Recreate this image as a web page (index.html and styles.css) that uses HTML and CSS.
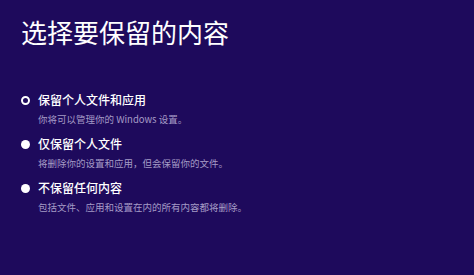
FILE: index.html
```html
<!DOCTYPE html>
<html lang="zh-CN">
<head>
  <meta charset="UTF-8">
  <title>选择要保留的内容</title>
  <link rel="stylesheet" href="styles.css">
</head>
<body>
  <main class="page">
    <h1>选择要保留的内容</h1>
    <ul class="options">
      <li class="option selected">
        <span class="dot"></span>
        <div>
          <div class="label">保留个人文件和应用</div>
          <div class="desc">你将可以管理你的 Windows 设置。</div>
        </div>
      </li>
      <li class="option">
        <span class="dot"></span>
        <div>
          <div class="label">仅保留个人文件</div>
          <div class="desc">将删除你的设置和应用，但会保留你的文件。</div>
        </div>
      </li>
      <li class="option">
        <span class="dot"></span>
        <div>
          <div class="label">不保留任何内容</div>
          <div class="desc">包括文件、应用和设置在内的所有内容都将删除。</div>
        </div>
      </li>
    </ul>
  </main>
</body>
</html>
```

FILE: styles.css
```css
* {
  box-sizing: border-box;
}

body {
  margin: 0;
  background: #1e0a5c;
  color: #fff;
  font-family: "Noto Sans CJK SC", "Noto Sans", sans-serif;
}

.page {
  padding: 14px 21px;
}

h1 {
  margin: 0;
  font-size: 26px;
  font-weight: 400;
  line-height: 36px;
}

.options {
  list-style: none;
  margin: 40px 0 0;
  padding: 0;
}

.option {
  display: flex;
  align-items: flex-start;
  gap: 8px;
  margin-bottom: 6px;
}

.dot {
  width: 9px;
  height: 9px;
  margin-top: 6px;
  border-radius: 50%;
  background: #fff;
  flex: none;
}

.option.selected .dot {
  background: #1e0a5c;
  border: 2.5px solid #fff;
}

.label {
  font-size: 12px;
  line-height: 20px;
  font-weight: 500;
}

.desc {
  font-size: 9.5px;
  line-height: 18px;
  color: #a59bc6;
}
```
